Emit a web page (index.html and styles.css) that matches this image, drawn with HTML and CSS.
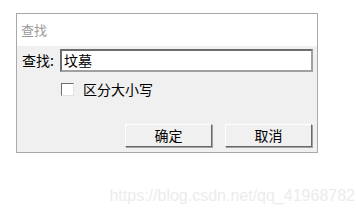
FILE: index.html
```html
<!DOCTYPE html>
<html lang="zh-CN">
<head>
    <meta charset="UTF-8">
    <title>查找</title>
    <link rel="stylesheet" href="styles.css">
</head>
<body>
    <div class="dialog">
        <div class="title">查找</div>
        <div class="content">
            <div class="row">
                <span class="label">查找:</span>
                <div class="input">坟墓</div>
            </div>
            <div class="row check-row">
                <span class="checkbox"></span>
                <span class="check-label">区分大小写</span>
            </div>
            <div class="buttons">
                <div class="btn">确定</div>
                <div class="btn">取消</div>
            </div>
        </div>
    </div>
    <div class="watermark">https://blog.csdn.net/qq_41968782</div>
</body>
</html>
```

FILE: styles.css
```css
body {
    margin: 0;
    background: #fff;
    font-family: "Noto Sans CJK SC", "Liberation Sans", sans-serif;
    font-size: 14px;
    color: #000;
}

.dialog {
    margin: 13px 0 0 16px;
    width: 300px;
    height: 138px;
    border: 1px solid #a9a9a9;
    display: flex;
    flex-direction: column;
}

.title {
    height: 32px;
    background: #fff;
    color: #9a9a9a;
    font-size: 13px;
    line-height: 32px;
    padding-left: 4px;
}

.content {
    flex: 1;
    background: #f0f0f0;
    padding-top: 3px;
}

.row {
    display: flex;
    align-items: center;
}

.label {
    width: 38px;
    padding-left: 5px;
    line-height: 23px;
}

.input {
    width: 247px;
    height: 19px;
    line-height: 19px;
    background: #fff;
    border: 2px solid #8c8c8c;
    border-color: #6d6d6d #a0a0a0 #a0a0a0 #6d6d6d;
    padding-left: 2px;
    font-size: 14px;
}

.check-row {
    margin-top: 9px;
    padding-left: 44px;
}

.checkbox {
    width: 11px;
    height: 11px;
    background: #fff;
    border: 1px solid #7a7a7a;
    border-color: #6d6d6d #e3e3e3 #e3e3e3 #6d6d6d;
}

.check-label {
    margin-left: 9px;
    line-height: 16px;
}

.buttons {
    display: flex;
    gap: 13px;
    margin-top: 27px;
    padding-left: 108px;
}

.btn {
    width: 85px;
    height: 21px;
    line-height: 21px;
    text-align: center;
    background: #f0f0f0;
    border: 1px solid;
    border-color: #fff #696969 #696969 #fff;
    box-shadow: 1px 1px 0 #a0a0a0;
}

.watermark {
    margin-top: 33px;
    text-align: right;
    padding-right: 1px;
    font-family: "Liberation Sans", Arial, sans-serif;
    font-size: 16px;
    line-height: 20px;
    color: #ececec;
}
```
